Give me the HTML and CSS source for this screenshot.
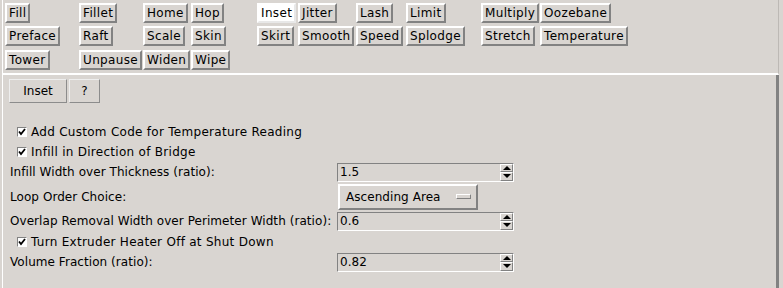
FILE: index.html
```html
<!DOCTYPE html>
<html lang="en">
<head>
    <meta charset="UTF-8">
    <title>Inset</title>
    <link rel="stylesheet" href="styles.css">
</head>
<body>
    <div class="window">
        <!-- Barre des plugins -->
        <div class="toolbar">
            <div class="plugins">
                <span class="btn">Fill</span>
                <span class="btn">Fillet</span>
                <span class="btn">Home</span>
                <span class="btn">Hop</span>
                <span class="btn selected">Inset</span>
                <span class="btn">Jitter</span>
                <span class="btn">Lash</span>
                <span class="btn">Limit</span>
                <span class="btn">Multiply</span>
                <span class="btn">Oozebane</span>

                <span class="btn">Preface</span>
                <span class="btn">Raft</span>
                <span class="btn">Scale</span>
                <span class="btn">Skin</span>
                <span class="btn">Skirt</span>
                <span class="btn">Smooth</span>
                <span class="btn">Speed</span>
                <span class="btn">Splodge</span>
                <span class="btn">Stretch</span>
                <span class="btn">Temperature</span>

                <span class="btn">Tower</span>
                <span class="btn">Unpause</span>
                <span class="btn">Widen</span>
                <span class="btn">Wipe</span>
            </div>
        </div>

        <!-- Panneau des réglages -->
        <div class="panel">
            <div class="actions">
                <span class="flat inset-btn">Inset</span>
                <span class="flat help-btn">?</span>
            </div>

            <div class="settings">
                <div class="row check-row">
                    <span class="check"><svg width="8" height="8" viewBox="0 0 8 8"><path d="M1 3.5 L3 6 L7 1" fill="none" stroke="#000" stroke-width="1.8"/></svg></span>
                    Add Custom Code for Temperature Reading
                </div>
                <div class="row check-row">
                    <span class="check"><svg width="8" height="8" viewBox="0 0 8 8"><path d="M1 3.5 L3 6 L7 1" fill="none" stroke="#000" stroke-width="1.8"/></svg></span>
                    Infill in Direction of Bridge
                </div>
                <div class="row spin-row">
                    <span class="label">Infill Width over Thickness (ratio):</span>
                    <span class="spin">
                        <span class="value">1.5</span>
                        <span class="arrows"><span class="arrow up"></span><span class="arrow down"></span></span>
                    </span>
                </div>
                <div class="row option-row">
                    <span class="label">Loop Order Choice:</span>
                    <span class="option">Ascending Area<span class="indicator"></span></span>
                </div>
                <div class="row spin-row">
                    <span class="label">Overlap Removal Width over Perimeter Width (ratio):</span>
                    <span class="spin">
                        <span class="value">0.6</span>
                        <span class="arrows"><span class="arrow up"></span><span class="arrow down"></span></span>
                    </span>
                </div>
                <div class="row check-row short">
                    <span class="check"><svg width="8" height="8" viewBox="0 0 8 8"><path d="M1 3.5 L3 6 L7 1" fill="none" stroke="#000" stroke-width="1.8"/></svg></span>
                    Turn Extruder Heater Off at Shut Down
                </div>
                <div class="row spin-row">
                    <span class="label">Volume Fraction (ratio):</span>
                    <span class="spin">
                        <span class="value">0.82</span>
                        <span class="arrows"><span class="arrow up"></span><span class="arrow down"></span></span>
                    </span>
                </div>
            </div>
        </div>
    </div>
</body>
</html>
```

FILE: styles.css
```css
/* Thème Tk gris */
body {
    margin: 0;
    padding: 0;
    background: #d9d5d1;
    color: #000000;
    font-family: 'DejaVu Sans', sans-serif;
    font-size: 12px;
    height: 288px;
    overflow: hidden;
}

.window {
    margin-left: 2px;
    width: 777px;
    height: 288px;
    display: flex;
    flex-direction: column;
}

/* Barre des plugins */
.toolbar {
    border-left: 1px solid #ffffff;
    border-right: 1px solid #bdb9b5;
    border-bottom: 2px solid #ffffff;
    padding: 3px 0 0 2px;
    box-sizing: border-box;
    height: 75px;
}

.plugins {
    display: grid;
    grid-template-columns: 74px 64px 48px 66px 41px 58px 50px 75px 59px auto;
    grid-template-rows: 23px 24px 20px;
    justify-items: start;
    align-items: start;
}

.btn {
    display: block;
    height: 20px;
    line-height: 16px;
    padding: 0 2px;
    box-sizing: border-box;
    border: 2px solid;
    border-color: #ffffff #828282 #828282 #ffffff;
    letter-spacing: 0.35px;
    white-space: nowrap;
}

.btn.selected {
    background: #ffffff;
    border-color: #ffffff #e8e8e8 #e8e8e8 #ffffff;
}

/* Panneau des réglages */
.panel {
    flex: 1;
    border-left: 1px solid #ffffff;
    border-right: 3px solid #828282;
    padding: 4px 0 0 6px;
}

.actions {
    display: flex;
    gap: 2px;
}

.flat {
    display: block;
    height: 24px;
    line-height: 22px;
    text-align: center;
    box-sizing: border-box;
    border: 1px solid;
    border-color: #eeeeee #8c8c8c #8c8c8c #eeeeee;
}

.inset-btn {
    width: 58px;
}

.help-btn {
    width: 31px;
}

.settings {
    margin-top: 18px;
    padding-left: 1px;
}

.row {
    display: flex;
    align-items: center;
    height: 20px;
    white-space: nowrap;
    letter-spacing: 0.06px;
}

.check-row {
    padding: 1px 0 0 7px;
    box-sizing: border-box;
    letter-spacing: 0.28px;
}

.check-row.short {
    height: 19px;
}

.spin-row {
    height: 22px;
}

.option-row {
    height: 27px;
}

.label {
    width: 327px;
}

.check {
    width: 10px;
    height: 10px;
    box-sizing: border-box;
    border: 1px solid;
    border-color: #828282 #ffffff #ffffff #828282;
    background: #ffffff;
    margin-right: 4px;
    display: flex;
    align-items: center;
    justify-content: center;
}

/* Champ numérique */
.spin {
    width: 177px;
    height: 19px;
    box-sizing: border-box;
    border: 1px solid;
    border-color: #828282 #ffffff #ffffff #828282;
    display: flex;
    align-items: stretch;
}

.value {
    flex: 1;
    padding-left: 2px;
    line-height: 17px;
}

.arrows {
    width: 13px;
    display: flex;
    flex-direction: column;
}

.arrow {
    flex: 1;
    box-sizing: border-box;
    border: 1px solid;
    border-color: #ffffff #828282 #828282 #ffffff;
    display: flex;
    align-items: center;
    justify-content: center;
}

.arrow::after {
    content: '';
    border-left: 4px solid transparent;
    border-right: 4px solid transparent;
}

.arrow.up::after {
    border-bottom: 4px solid #000000;
}

.arrow.down::after {
    border-top: 4px solid #000000;
}

/* Menu d'options */
.option {
    width: 140px;
    height: 26px;
    margin-left: 1px;
    box-sizing: border-box;
    border: 2px solid;
    border-color: #ffffff #828282 #828282 #ffffff;
    padding-left: 6px;
    display: flex;
    align-items: center;
}

.indicator {
    width: 15px;
    height: 5px;
    box-sizing: border-box;
    margin-left: 15px;
    border: 1px solid;
    border-color: #ffffff #828282 #828282 #ffffff;
}
```
